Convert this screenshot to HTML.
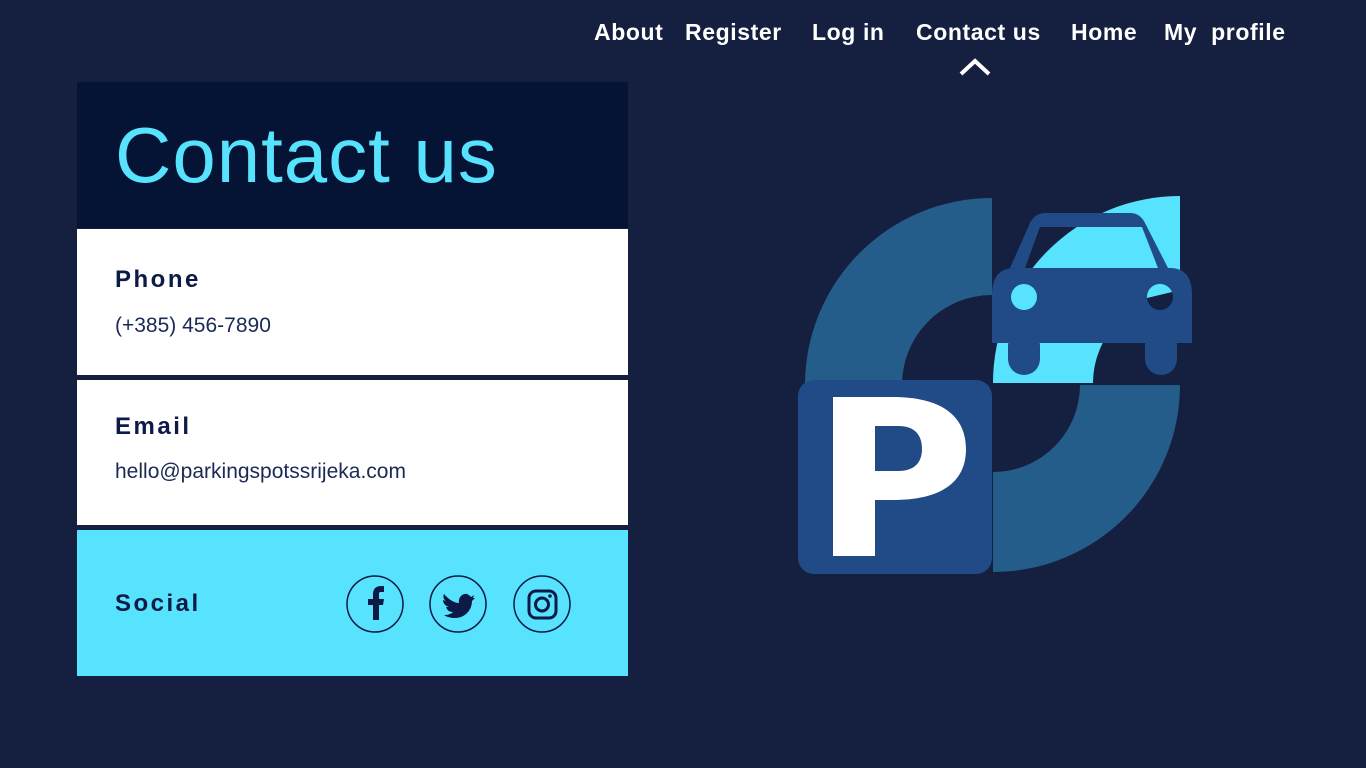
<!DOCTYPE html>
<html><head><meta charset="utf-8"><style>
body{margin:0;width:1366px;height:768px;background:#152040;font-family:"Liberation Sans",sans-serif;position:relative;overflow:hidden}
.nav a{position:absolute;top:19px;color:#fff;font-weight:bold;font-size:23px;letter-spacing:0.6px;text-decoration:none;white-space:nowrap}
.box{position:absolute;left:77px;width:551px}
.lbl{position:absolute;left:38px;font-size:24px;letter-spacing:2.5px;color:#0c1a45;font-weight:bold}
.val{position:absolute;left:38px;font-size:21px;color:#1a2a55}
</style></head><body>
<div class="nav">
<a style="left:594px">About</a><a style="left:685px">Register</a><a style="left:812px">Log in</a><a style="left:916px">Contact us</a><a style="left:1071px">Home</a><a style="left:1164px">My&nbsp; profile</a>
</div>
<svg style="position:absolute;left:958px;top:56px" width="36" height="22"><path d="M3 18 L17 5 L31 18" stroke="#fff" stroke-width="4" fill="none"/></svg>
<div class="box" style="top:82px;height:146px;background:#051435"><div style="position:absolute;left:38px;top:28px;font-size:78px;color:#57e3fe;letter-spacing:1px">Contact us</div></div>
<div class="box" style="top:229px;height:146px;background:#fff"><div class="lbl" style="top:37px">Phone</div><div class="val" style="top:85px">(+385) 456-7890</div></div>
<div class="box" style="top:380px;height:145px;background:#fff"><div class="lbl" style="top:33px">Email</div><div class="val" style="top:80px">hello@parkingspotssrijeka.com</div></div>
<div class="box" style="top:530px;height:146px;background:#57e3fe"><div class="lbl" style="top:60px">Social</div>
<svg style="position:absolute;left:268px;top:44px" width="230" height="60">
<g fill="none" stroke="#0c1a45" stroke-width="1.5"><circle cx="30" cy="30" r="28"/><circle cx="113" cy="30" r="28"/><circle cx="197" cy="30" r="28"/></g>
<path d="M28 46 V31 H23 V25 H28 V20 C28 15 31 12 36 12 H39 V18 H36 C34 18 34 19 34 20 V25 H39 L38 31 H34 V46Z" fill="#0c1a45"/>
<path d="M99 20 C104 26 110 29 114 29 C113 23 118 19 122 20 C124 21 125 22 126 23 L129 21 L128 24 L130 24 L127 27 C127 36 120 44 110 44 C106 44 102 43 99 41 C103 41 106 40 108 38 C104 38 102 36 101 33 L104 33 C100 32 98 29 98 26 L101 27 C98 25 98 22 99 20Z" fill="#0c1a45"/>
<rect x="184" y="17" width="27" height="27" rx="7" fill="none" stroke="#0c1a45" stroke-width="3"/><circle cx="197" cy="30.5" r="6.5" fill="none" stroke="#0c1a45" stroke-width="3"/><circle cx="205" cy="22" r="1.8" fill="#0c1a45"/>
</svg></div>
<svg style="position:absolute;left:0;top:0" width="1366" height="768">
<path d="M805 385 A187 187 0 0 1 992 198 V295 A90 90 0 0 0 902 385Z" fill="#245d8a"/>
<path d="M993 383 A187 187 0 0 1 1180 196 V296 A87 87 0 0 0 1093 383Z" fill="#57e3fe"/>
<path d="M993 572 A187 187 0 0 0 1180 385 H1080 A87 87 0 0 1 993 472Z" fill="#245d8a"/>
<rect x="804" y="500" width="20" height="70" fill="#57e3fe"/>
<rect x="798" y="380" width="194" height="194" rx="16" fill="#204b87"/>
<path d="M833 397 H893 C940 397 966 415 966 449 C966 483 940 500 893 500 H875 V556 H833Z M875 426 V471 H898 C915 471 922 462 922 449 C922 435 915 426 898 426Z" fill="#fff" fill-rule="evenodd"/>
<path d="M1010 268 L1030 223 Q1035 213 1046 213 H1130 Q1140 213 1145 223 L1168 268 Z M1040 227 L1025 268 H1158 L1142 227Z" fill="#204b87" fill-rule="evenodd"/>
<path d="M992 295 Q992 268 1015 268 H1170 Q1192 268 1192 295 V343 H992Z" fill="#204b87"/>
<rect x="1008" y="330" width="32" height="45" rx="16" fill="#204b87"/>
<rect x="1145" y="330" width="32" height="45" rx="16" fill="#204b87"/>
<circle cx="1024" cy="297" r="13" fill="#57e3fe"/><circle cx="1160" cy="297" r="13" fill="#152040"/>
<path d="M1147 298 A13 13 0 0 1 1172 292Z" fill="#57e3fe"/>
</svg>
</body></html>
